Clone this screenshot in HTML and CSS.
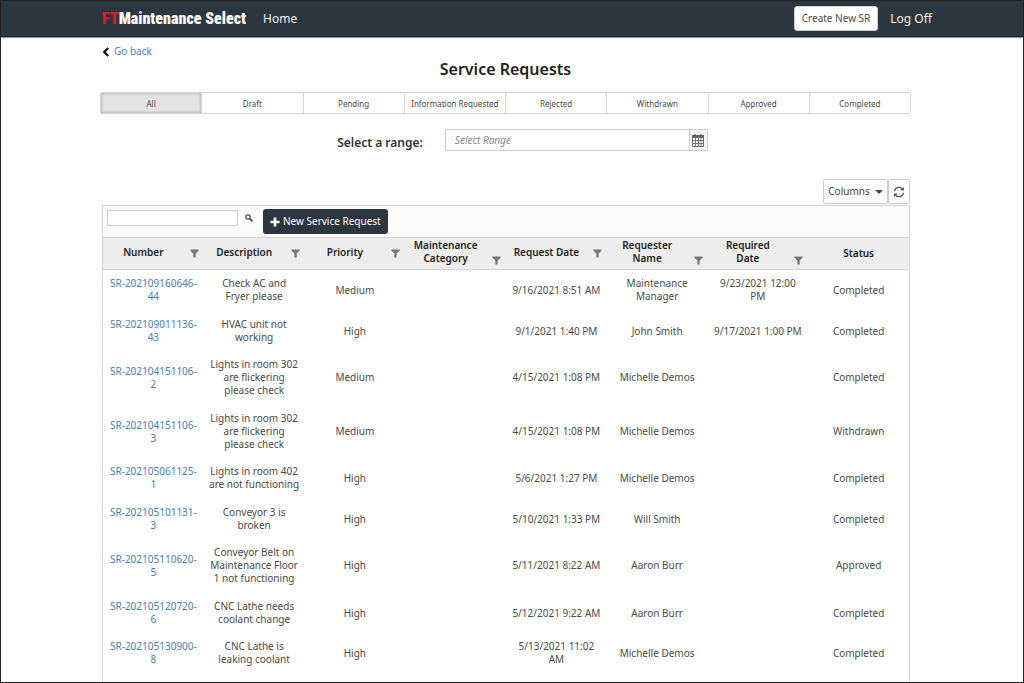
FILE: index.html
```
<!DOCTYPE html>
<html lang="en">
<head>
    <meta charset="UTF-8">
    <meta name="viewport" content="width=device-width, initial-scale=1.0">
    <title>Service Requests</title>
    <link rel="stylesheet" href="styles.css">
</head>
<body>
    <svg class="sprite" aria-hidden="true">
        <symbol id="filter" viewBox="0 0 10 10"><path d="M0.5 0.5h9v1.5L6.3 5v4.5H3.7V5L0.5 2z"/></symbol>
    </svg>
    <header class="navbar">
        <a class="brand" href="#"><span class="brand-ft">FT</span>Maintenance Select</a>
        <a class="nav-link" href="#">Home</a>
        <div class="nav-right">
            <button type="button" class="create-btn">Create New SR</button>
            <a class="nav-link" href="#">Log Off</a>
        </div>
    </header>
    <main class="content">
        <div class="back">
            <svg width="8" height="10" viewBox="0 0 8 10"><path d="M6.2 1L2.2 5l4 4" fill="none" stroke="#111" stroke-width="2.2"/></svg>
            <a href="#">Go back</a>
        </div>
        <h1>Service Requests</h1>
        <div class="tabs">
            <button type="button" class="tab active">All</button>
            <button type="button" class="tab">Draft</button>
            <button type="button" class="tab">Pending</button>
            <button type="button" class="tab">Information Requested</button>
            <button type="button" class="tab">Rejected</button>
            <button type="button" class="tab">Withdrawn</button>
            <button type="button" class="tab">Approved</button>
            <button type="button" class="tab">Completed</button>
        </div>
        <div class="range">
            <label for="range-input">Select a range:</label>
            <div class="range-box">
                <input type="text" id="range-input" placeholder="Select Range">
                <button type="button" aria-label="Open calendar">
                    <svg width="12" height="13" viewBox="0 0 12 13">
                        <path d="M0.5 1.5h11v11h-11z" fill="#fff" stroke="#666"/>
                        <path d="M0 1h12v3H0z" fill="#666"/>
                        <path d="M3 0v2M9 0v2" stroke="#444"/>
                        <path d="M3.5 4v8M6.5 4v8M9 4v8M1 6.5h10M1 9.5h10" stroke="#777"/>
                    </svg>
                </button>
            </div>
        </div>
        <div class="grid-actions">
            <button type="button" class="columns-btn" aria-haspopup="true">Columns <span class="caret"></span></button>
            <button type="button" class="refresh-btn" aria-label="Refresh">
                <svg width="12" height="12" viewBox="0 0 12 12">
                    <path d="M1.5 5.2A4.5 4.5 0 0 1 9.6 3.2M10.5 6.8A4.5 4.5 0 0 1 2.4 8.8" fill="none" stroke="#555" stroke-width="1.3"/>
                    <path d="M11 1v3.6H7.4zM1 11V7.4h3.6z" fill="#555"/>
                </svg>
            </button>
        </div>
        <section class="grid">
            <div class="toolbar">
                <input type="text" class="search" aria-label="Search">
                <button type="button" class="search-btn" aria-label="Search requests">
                    <svg width="8" height="8" viewBox="0 0 8 8"><circle cx="3" cy="3" r="2.2" fill="none" stroke="#444" stroke-width="1.2"/><path d="M4.6 4.6L7.4 7.4" stroke="#444" stroke-width="1.6"/></svg>
                </button>
                <button type="button" class="new-btn">
                    <svg width="10" height="10" viewBox="0 0 10 10"><path d="M5 0.5v9M0.5 5h9" stroke="#fff" stroke-width="2.6"/></svg>
                    New Service Request
                </button>
            </div>
            <table>
                <thead>
                    <tr>
                        <th><div class="head"><span>Number</span><svg class="filter"><use href="#filter"/></svg></div></th>
                        <th><div class="head"><span>Description</span><svg class="filter"><use href="#filter"/></svg></div></th>
                        <th><div class="head"><span>Priority</span><svg class="filter"><use href="#filter"/></svg></div></th>
                        <th><div class="head two-line"><span>Maintenance Category</span><svg class="filter"><use href="#filter"/></svg></div></th>
                        <th><div class="head"><span>Request Date</span><svg class="filter"><use href="#filter"/></svg></div></th>
                        <th><div class="head two-line"><span>Requester Name</span><svg class="filter"><use href="#filter"/></svg></div></th>
                        <th><div class="head two-line"><span>Required<br>Date</span><svg class="filter"><use href="#filter"/></svg></div></th>
                        <th>Status</th>
                    </tr>
                </thead>
                <tbody>
                    <tr><td><a href="#">SR-202109160646-44</a></td><td>Check AC and<br>Fryer please</td><td>Medium</td><td></td><td>9/16/2021 8:51 AM</td><td>Maintenance Manager</td><td>9/23/2021 12:00 PM</td><td>Completed</td></tr>
                    <tr><td><a href="#">SR-202109011136-43</a></td><td>HVAC unit not working</td><td>High</td><td></td><td>9/1/2021 1:40 PM</td><td>John Smith</td><td>9/17/2021 1:00 PM</td><td>Completed</td></tr>
                    <tr><td><a href="#">SR-202104151106-2</a></td><td>Lights in room 302 are flickering please check</td><td>Medium</td><td></td><td>4/15/2021 1:08 PM</td><td>Michelle Demos</td><td></td><td>Completed</td></tr>
                    <tr><td><a href="#">SR-202104151106-3</a></td><td>Lights in room 302 are flickering please check</td><td>Medium</td><td></td><td>4/15/2021 1:08 PM</td><td>Michelle Demos</td><td></td><td>Withdrawn</td></tr>
                    <tr><td><a href="#">SR-202105061125-1</a></td><td>Lights in room 402 are not functioning</td><td>High</td><td></td><td>5/6/2021 1:27 PM</td><td>Michelle Demos</td><td></td><td>Completed</td></tr>
                    <tr><td><a href="#">SR-202105101131-3</a></td><td>Conveyor 3 is broken</td><td>High</td><td></td><td>5/10/2021 1:33 PM</td><td>Will Smith</td><td></td><td>Completed</td></tr>
                    <tr><td><a href="#">SR-202105110620-5</a></td><td>Conveyor Belt on Maintenance Floor 1 not functioning</td><td>High</td><td></td><td>5/11/2021 8:22 AM</td><td>Aaron Burr</td><td></td><td>Approved</td></tr>
                    <tr><td><a href="#">SR-202105120720-6</a></td><td>CNC Lathe needs coolant change</td><td>High</td><td></td><td>5/12/2021 9:22 AM</td><td>Aaron Burr</td><td></td><td>Completed</td></tr>
                    <tr><td><a href="#">SR-202105130900-8</a></td><td>CNC Lathe is leaking coolant</td><td>High</td><td></td><td>5/13/2021 11:02 AM</td><td>Michelle Demos</td><td></td><td>Completed</td></tr>
                </tbody>
            </table>
        </section>
    </main>
</body>
</html>
```
FILE: styles.css
```
* {
    box-sizing: border-box;
}
body {
    margin: 0;
    min-height: 100vh;
    display: flex;
    flex-direction: column;
    border: 1px solid #222;
    background: #fff;
    color: #4a4a4a;
    font-family: "Segoe UI", "Noto Sans", sans-serif;
    font-size: 10px;
    line-height: 13px;
}
button, input {
    font: inherit;
    color: inherit;
    margin: 0;
}
button {
    cursor: pointer;
}
a {
    color: #4682b8;
    text-decoration: none;
}
svg {
    flex: none;
}
.sprite {
    position: absolute;
    width: 0;
    height: 0;
}
.navbar {
    display: flex;
    align-items: center;
    height: 36px;
    padding: 0 91px 0 101px;
    background: #2d363f;
    border-bottom: 1px solid #1c2228;
    box-shadow: 0 1px 0 #999;
}
.brand {
    color: #fff;
    font-family: Impact, "Roboto Condensed", "Open Sans Condensed", "Noto Sans Condensed", "Roboto", sans-serif;
    font-size: 16px;
    font-weight: 900;
    line-height: 20px;
    margin-right: 17px;
}
.brand-ft {
    color: #e0162b;
}
.nav-link {
    color: #f0f0f0;
    font-size: 12px;
    line-height: 20px;
}
.nav-right {
    display: flex;
    align-items: center;
    gap: 12px;
    margin-left: auto;
}
.create-btn {
    height: 25px;
    padding: 0 7px;
    background: #fff;
    border: 1px solid #ccc;
    border-radius: 3px;
}
.content {
    flex: 1;
    display: flex;
    flex-direction: column;
    padding: 8px 112px 0 99px;
}
.back {
    display: flex;
    align-items: center;
    gap: 4px;
    padding-left: 2px;
}
h1 {
    margin: 0 0 12px;
    text-align: center;
    color: #222;
    font-size: 16px;
    font-weight: 600;
    line-height: 22px;
}
.tabs {
    display: flex;
    border: 1px solid #d4d4d4;
    border-radius: 2px;
}
.tab {
    flex: 1 1 0;
    min-width: 0;
    height: 20px;
    padding: 0;
    background: #fff;
    border: 0;
    border-left: 1px solid #d4d4d4;
    font-size: 8px;
    white-space: nowrap;
}
.tab:first-child {
    border-left: 0;
}
.tab.active {
    background: #e3e3e3;
    box-shadow: inset 0 0 3px #999;
}
.range {
    display: flex;
    justify-content: center;
    gap: 22px;
    margin-top: 15px;
    padding-left: 34px;
}
.range label {
    padding-top: 5px;
    color: #333;
    font-size: 12px;
    font-weight: 600;
    line-height: 18px;
}
.range-box {
    display: flex;
    width: 263px;
    height: 22px;
    border: 1px solid #ccc;
    border-radius: 2px;
}
.range-box input {
    flex: 1;
    min-width: 0;
    padding: 0 9px;
    border: 0;
    background: none;
}
.range-box input::placeholder {
    color: #888;
    font-style: italic;
}
.range-box button {
    display: flex;
    align-items: center;
    justify-content: center;
    width: 18px;
    padding: 0;
    background: #f5f5f5;
    border: 0;
    border-left: 1px solid #ccc;
}
.grid-actions {
    display: flex;
    justify-content: flex-end;
    margin-top: 27px;
    padding-right: 1px;
}
.grid-actions button {
    display: flex;
    align-items: center;
    justify-content: center;
    height: 25px;
    padding: 0;
    background: #fcfcfc;
    border: 1px solid #ccc;
    border-radius: 2px;
}
.grid-actions .columns-btn {
    gap: 5px;
    width: 65px;
}
.grid-actions .refresh-btn {
    width: 22px;
}
.caret {
    border: 4px solid transparent;
    border-top-color: #444;
    border-bottom: 0;
}
.grid {
    flex: 1;
    margin: 1px 1px 0 2px;
    border: 1px solid #d4d4d4;
    border-bottom: 0;
}
.toolbar {
    display: flex;
    height: 32px;
    padding: 3px 4px;
    background: #fbfbfb;
    border-bottom: 1px solid #d4d4d4;
}
.search {
    width: 131px;
    height: 16px;
    margin-top: 1px;
    padding: 0 4px;
    background: #fff;
    border: 1px solid #ccc;
}
.search-btn {
    width: 22px;
    height: 18px;
    margin-right: 3px;
    padding: 0;
    background: none;
    border: 0;
}
.new-btn {
    display: flex;
    align-items: center;
    gap: 3px;
    height: 25px;
    padding: 0 7px;
    background: #2d363f;
    border: 0;
    border-radius: 3px;
    color: #fff;
}
table {
    width: 100%;
    table-layout: fixed;
    border-collapse: separate;
    border-spacing: 0;
    text-align: center;
}
th {
    height: 32px;
    padding: 0 5px;
    background: #ededed;
    border-bottom: 1px solid #d4d4d4;
    color: #222;
    font-weight: 600;
}
.head {
    display: flex;
    align-items: center;
    gap: 11px;
}
.head span {
    flex: 1;
    padding-bottom: 3px;
}
.filter {
    width: 9px;
    height: 9px;
    fill: #777;
}
.two-line .filter {
    margin-top: 14px;
}
td {
    padding: 7px 5px;
    vertical-align: middle;
}
tr:nth-child(odd) td {
    padding-bottom: 8px;
}
```
